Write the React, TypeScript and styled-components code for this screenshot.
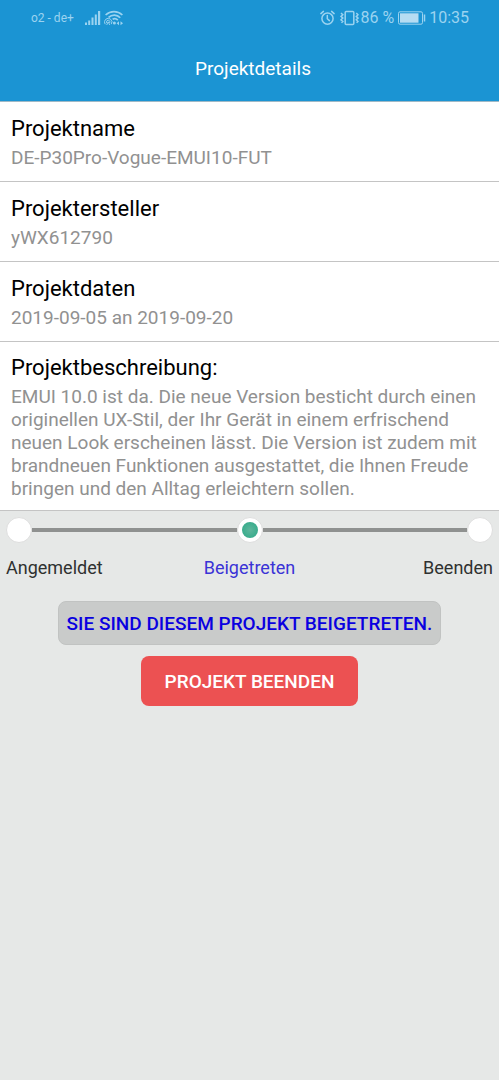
import React from "react";
import styled, { createGlobalStyle } from "styled-components";

const GlobalStyle = createGlobalStyle`
  * { box-sizing: border-box; }
  html, body { margin: 0; padding: 0; background: #e6e8e7; }
  body { font-family: Roboto, "Liberation Sans", sans-serif; }
`;

const Screen = styled.div`
  min-height: 100vh;
  background: #e6e8e7;
`;

const Header = styled.header`
  background: #1b94d3;
  border-bottom: 1px solid #9fb9c6;
`;

const StatusBar = styled.div`
  display: flex;
  align-items: center;
  justify-content: space-between;
  height: 36px;
  padding: 0 30px 0 31px;
  color: #9bd3f0;
`;

const StatusGroup = styled.div`
  display: flex;
  align-items: center;
`;

const Carrier = styled.span`
  font-size: 12px;
  margin-right: 11px;
`;

const StatusText = styled.span`
  font-size: 16px;
  line-height: 20px;
`;

const BatteryLevel = styled(StatusText)`
  margin-right: 4px;
`;

const StatusIcon = styled.svg<{ $gap: number }>`
  display: block;
  flex: none;
  margin-right: ${(p) => p.$gap}px;
`;

const Title = styled.h1`
  margin: 0;
  padding-left: 7px;
  height: 65px;
  line-height: 65px;
  text-align: center;
  color: #fff;
  font-size: 19px;
  font-weight: 400;
`;

const Details = styled.dl`
  margin: 0;
  background: #fff;
`;

const Row = styled.div<{ $long?: boolean }>`
  padding: ${(p) => (p.$long ? "12px 12px 10px 11px" : "13px 12px 12px 11px")};
  border-bottom: 1px solid #c4c4c4;
`;

const Label = styled.dt`
  color: #000;
  font-size: 22px;
  line-height: 28px;
  margin-bottom: 3px;
`;

const Value = styled.dd`
  margin: 0;
  color: #919191;
  font-size: 19px;
  line-height: 23px;
`;

const Stepper = styled.section`
  padding: 6px 6px 0;
`;

const Track = styled.div`
  display: flex;
  align-items: center;
`;

const Line = styled.div`
  flex: 1;
  height: 4px;
  background: #8f9190;
`;

const Dot = styled.div`
  display: flex;
  align-items: center;
  justify-content: center;
  width: 26px;
  height: 26px;
  border-radius: 50%;
  border: 1px solid #dedede;
  background: #fff;
`;

const ActiveMark = styled.div`
  width: 16px;
  height: 16px;
  border-radius: 50%;
  background: radial-gradient(circle, #5fb59c 0%, #3fae8f 60%, #2fa385 100%);
`;

const StepLabels = styled.div`
  display: grid;
  grid-template-columns: 1fr auto 1fr;
  margin-top: 13px;
`;

const StepLabel = styled.span<{ $align: "left" | "center" | "right"; $active?: boolean }>`
  text-align: ${(p) => p.$align};
  color: ${(p) => (p.$active ? "#3a33d6" : "#2f3130")};
  font-size: 18px;
  line-height: 24px;
`;

const Actions = styled.div`
  display: flex;
  flex-direction: column;
  align-items: center;
  gap: 11px;
  padding: 21px 6px;
`;

const ActionButton = styled.button`
  border: 0;
  border-radius: 8px;
  font-family: inherit;
  font-size: 19px;
  font-weight: 500;
`;

const JoinedButton = styled(ActionButton)`
  height: 44px;
  padding: 0 8px;
  border: 1px solid #c1c3c2;
  background: #c9cbca;
  color: #0a00e0;
`;

const EndButton = styled(ActionButton)`
  height: 50px;
  padding: 0 24px;
  background: #ec5152;
  color: #fff;
  cursor: pointer;
`;

const details = [
  { label: "Projektname", value: "DE-P30Pro-Vogue-EMUI10-FUT" },
  { label: "Projektersteller", value: "yWX612790" },
  { label: "Projektdaten", value: "2019-09-05 an 2019-09-20" },
  {
    label: "Projektbeschreibung:",
    value:
      "EMUI 10.0 ist da. Die neue Version besticht durch einen originellen UX-Stil, der Ihr Gerät in einem erfrischend neuen Look erscheinen lässt. Die Version ist zudem mit brandneuen Funktionen ausgestattet, die Ihnen Freude bringen und den Alltag erleichtern sollen.",
    long: true,
  },
];

const Signal = () => (
  <StatusIcon $gap={3} width="16" height="16" viewBox="0 0 16 16" fill="currentColor" aria-hidden="true">
    <rect x="0" y="12.5" width="2" height="2.5" />
    <rect x="3.200" y="10.5" width="2" height="4.5" />
    <rect x="6.500" y="7.5" width="2" height="7.5" />
    <rect x="9.800" y="4.5" width="2" height="10.5" />
    <rect x="13" y="1" width="2.200" height="14" />
  </StatusIcon>
);

const Wifi = () => (
  <StatusIcon $gap={0} width="20" height="16" viewBox="0 0 20 16" fill="none" stroke="currentColor" strokeWidth="1.7" aria-hidden="true">
    <path d="M1.600 5C6.500 .4 13.500 .4 18.400 5" />
    <path d="M4.600 7.400C8 4.300 13 4.300 16.200 7.800" />
    <path d="M8.600 9.200C10.400 8.200 12.400 8.600 13.800 10.100" />
    <path d="M1.200 14.200A3.700 3.700 0 1 1 7.200 14.200M2.900 13A1.700 1.700 0 1 1 5.500 13" strokeWidth="1" />
    <path d="M4.200 11.800L2.700 15M4.200 11.800L5.700 15" strokeWidth="0.900" />
    <circle cx="10.400" cy="13" r="1.500" fill="currentColor" stroke="none" />
    <path d="M15 11.200L12.600 13.200L15 15.200ZM16.500 11.200L19 13.200L16.500 15.200Z" fill="currentColor" stroke="none" />
  </StatusIcon>
);

const Alarm = () => (
  <StatusIcon $gap={5} width="15" height="16" viewBox="0 0 15 16" fill="none" stroke="currentColor" strokeWidth="1.5" strokeLinecap="round" aria-hidden="true">
    <circle cx="7.500" cy="8.600" r="5.600" />
    <path d="M0.900 3.600L3.400 1.400M11.600 1.400L14.100 3.600M7.300 5.600V8.700L9.400 10.600" />
  </StatusIcon>
);

const Vibrate = () => (
  <StatusIcon $gap={1} width="19" height="16" viewBox="0 0 19 16" fill="none" stroke="currentColor" strokeWidth="1.5" aria-hidden="true">
    <rect x="5.200" y="1.500" width="8.600" height="13" rx="1" />
    <path d="M1 3L2.800 4.700L1 6.400L2.800 8.100L1 9.800L2.800 11.500L1.500 12.800" />
    <path d="M16.300 3L18 4.700L16.300 6.400L18 8.100L16.300 9.800L18 11.500L16.600 12.800" />
  </StatusIcon>
);

const Battery = () => (
  <StatusIcon $gap={3} width="28" height="14" viewBox="0 0 28 14" fill="none" stroke="currentColor" aria-hidden="true">
    <rect x="0.500" y="0.800" width="24" height="12.400" rx="1.500" strokeWidth="1" />
    <rect x="2" y="2.300" width="18.500" height="9.400" fill="#b5dcf2" stroke="none" />
    <path d="M26.500 3.500V10.500" strokeWidth="1.500" />
  </StatusIcon>
);

export default function App() {
  return (
    <Screen>
      <GlobalStyle />
      <Header>
        <StatusBar>
          <StatusGroup>
            <Carrier>o2 - de+</Carrier>
            <Signal />
            <Wifi />
          </StatusGroup>
          <StatusGroup>
            <Alarm />
            <Vibrate />
            <BatteryLevel>86 %</BatteryLevel>
            <Battery />
            <StatusText>10:35</StatusText>
          </StatusGroup>
        </StatusBar>
        <Title>Projektdetails</Title>
      </Header>
      <main>
        <Details>
          {details.map((d) => (
            <Row key={d.label} $long={d.long}>
              <Label>{d.label}</Label>
              <Value>{d.value}</Value>
            </Row>
          ))}
        </Details>
        <Stepper aria-label="Projektstatus">
          <Track>
            <Dot />
            <Line />
            <Dot>
              <ActiveMark />
            </Dot>
            <Line />
            <Dot />
          </Track>
          <StepLabels>
            <StepLabel $align="left">Angemeldet</StepLabel>
            <StepLabel $align="center" $active aria-current="step">
              Beigetreten
            </StepLabel>
            <StepLabel $align="right">Beenden</StepLabel>
          </StepLabels>
        </Stepper>
        <Actions>
          <JoinedButton type="button" disabled>
            SIE SIND DIESEM PROJEKT BEIGETRETEN.
          </JoinedButton>
          <EndButton type="button">PROJEKT BEENDEN</EndButton>
        </Actions>
      </main>
    </Screen>
  );
}
